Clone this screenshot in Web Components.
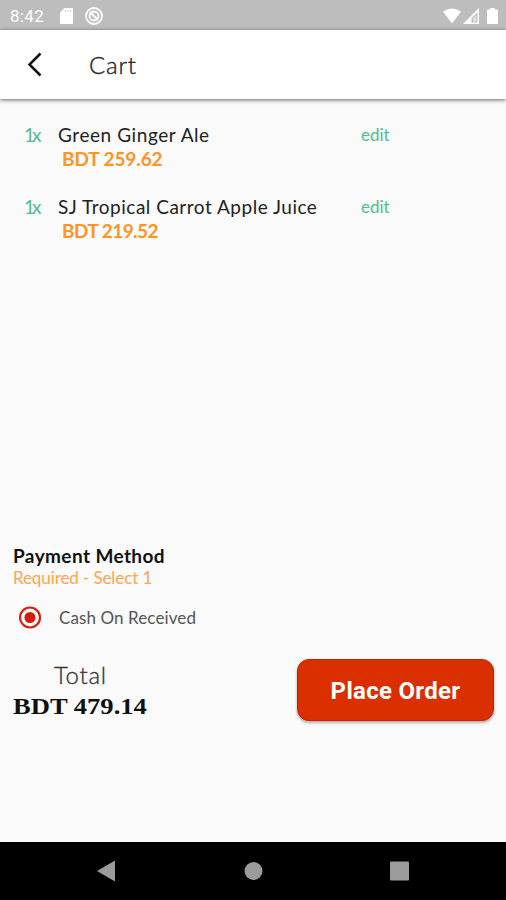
<!DOCTYPE html>
<html lang="en">

<head>
    <meta charset="utf-8">
    <title>Cart</title>
    <style>
    html, body {
        margin: 0;
        height: 100%;
        overflow: hidden;
        background: #fafafa;
        font-family: Lato, "Liberation Sans", sans-serif;
    }
    </style>
</head>

<body>
    <cart-screen></cart-screen>

    <template id="status-bar-template">
        <style>
        :host {
            display: flex;
            align-items: center;
            height: 30px;
            box-sizing: border-box;
            padding: 2px 8px 0 10px;
            background: #bdbdbd;
            color: #fff;
            font: 17px/28px Roboto, sans-serif;
        }
        .time { width: 50px; letter-spacing: .3px; }
        svg { display: block; fill: #fff; flex: none; }
        .sd { margin-right: 12px; }
        .wifi { margin-left: auto; margin-right: 2px; }
        .signal { margin-right: 8px; }
        </style>
        <span class="time">8:42</span>
        <svg class="sd" width="13" height="16" viewBox="0 0 13 16"><path d="M4.500 0H12q1 0 1 1v14q0 1-1 1H1q-1 0-1-1V4.500z"/><path d="M5 3h1.200M7.500 3h1.200M10 3h1.200" stroke="#bdbdbd" stroke-width="2" opacity=".6"/></svg>
        <svg width="18" height="18" viewBox="0 0 18 18"><circle cx="9" cy="9" r="8" fill="none" stroke="#fff" stroke-width="1.800"/><circle cx="9" cy="9" r="4.500" fill="none" stroke="#fff" stroke-width="1.800"/><path d="M5 5l8 8" stroke="#fff" stroke-width="2"/></svg>
        <svg class="wifi" width="18" height="16" viewBox="0 0 18 16"><path d="M0 3.700Q9-2.800 18 3.700L9 15.500z"/></svg>
        <svg class="signal" width="16" height="16" viewBox="0 0 16 16"><path fill-rule="evenodd" d="M16 0v16H0zM14.500 4.500l-6 5.500v4.500h6z"/><path d="M10 10l3.500-3v6.500H10z" opacity=".55"/></svg>
        <svg width="11" height="16" viewBox="0 0 11 16"><path d="M3.300 0h4.400v1.600H10q1 0 1 1V15q0 1-1 1H1q-1 0-1-1V2.600q0-1 1-1h2.300z"/></svg>
    </template>

    <template id="app-bar-template">
        <style>
        :host {
            display: flex;
            align-items: center;
            height: 69px;
            box-sizing: border-box;
            padding-left: 27px;
            background: #fff;
            box-shadow: 0 1px 4px rgba(0, 0, 0, .6);
        }
        svg { display: block; margin-right: 47px; }
        h1 { margin: 0; font-size: 24px; line-height: 30px; font-weight: 300; color: #222; letter-spacing: .8px; -webkit-text-stroke: .35px #222; }
        </style>
        <svg width="15" height="25" viewBox="0 0 15 25"><path d="M13.500 1.500L2.500 12.500l11 11" fill="none" stroke="#111" stroke-width="2.500"/></svg>
        <h1><slot></slot></h1>
    </template>

    <template id="cart-item-template">
        <style>
        :host {
            display: grid;
            grid-template-columns: 34px 303px auto;
            justify-content: start;
            align-content: start;
            padding-left: 24px;
            height: 71.500px;
            box-sizing: border-box;
            font-size: 19px;
            line-height: 24px;
            white-space: nowrap;
        }
        .count, .edit { color: #50bd91; }
        .count { letter-spacing: -3px; }
        .name { color: #222; letter-spacing: var(--name-spacing, 0); }
        .edit { font-size: 17px; }
        .price { grid-column: 2; padding-left: 4px; line-height: 23px; font-weight: 700; color: #ff9326; letter-spacing: var(--price-spacing, 0); }
        </style>
        <span class="count">1x</span>
        <span class="name"><slot name="name"></slot></span>
        <span class="edit">edit</span>
        <span class="price"><slot name="price"></slot></span>
    </template>

    <template id="payment-method-template">
        <style>
        :host { display: block; padding-left: 13px; white-space: nowrap; }
        h2 { margin: 0; font-size: 19px; line-height: 24px; font-weight: 700; color: #111; letter-spacing: .4px; }
        p { margin: 0; font-size: 17px; line-height: 20px; color: #ffa54f; letter-spacing: -.1px; }
        .option { display: flex; align-items: center; gap: 17px; height: 24px; margin-top: 17px; padding-left: 6px; font-size: 17px; color: #555; letter-spacing: .1px; }
        svg { display: block; }
        </style>
        <h2>Payment Method</h2>
        <p>Required - Select 1</p>
        <div class="option">
            <svg width="23" height="23" viewBox="0 0 23 23"><circle cx="11" cy="11.500" r="10" fill="none" stroke="#d71f16" stroke-width="2.200"/><circle cx="11" cy="11.500" r="5.500" fill="#d71b0b"/></svg>
            <span><slot></slot></span>
        </div>
    </template>

    <template id="order-footer-template">
        <style>
        :host { display: flex; justify-content: space-between; padding: 0 12px 0 13px; white-space: nowrap; }
        .label { padding-left: 41px; font-size: 24px; line-height: 31px; font-weight: 300; color: #333; letter-spacing: .7px; -webkit-text-stroke: .3px #333; }
        .sum { font: bold 23px/34px "Liberation Serif", serif; color: #111; transform: scaleX(1.155); transform-origin: left; }
        button {
            width: 197px;
            height: 62px;
            padding: 2px 0 0;
            border: 1px solid #d51a00;
            border-radius: 12px;
            background: #da2f00;
            box-shadow: 0 2px 3px rgba(0, 0, 0, .3);
            color: #fff;
            font: 700 24px/30px Roboto, sans-serif;
            letter-spacing: .3px;
        }
        </style>
        <div>
            <div class="label">Total</div>
            <div class="sum"><slot></slot></div>
        </div>
        <button>Place Order</button>
    </template>

    <template id="nav-bar-template">
        <style>
        :host {
            display: flex;
            align-items: center;
            justify-content: space-between;
            height: 58px;
            box-sizing: border-box;
            padding: 0 96px 0 97px;
            background: #000;
        }
        svg { display: block; fill: #9b9b9b; }
        </style>
        <svg width="18" height="22" viewBox="0 0 18 22"><path d="M18 .5v21L0 11z"/></svg>
        <svg width="20" height="20" viewBox="0 0 20 20"><circle cx="10.500" cy="10" r="9"/></svg>
        <svg width="20" height="20" viewBox="0 0 20 20"><rect x="0" y=".5" width="19" height="19" rx="1"/></svg>
    </template>

    <template id="cart-screen-template">
        <style>
        :host { display: flex; flex-direction: column; height: 900px; width: 506px; }
        .items { padding-top: 24px; height: 421px; }
        .first { --name-spacing: .57px; --price-spacing: -.1px; }
        .second { --name-spacing: .51px; --price-spacing: -.55px; }
        order-footer { margin-top: 30px; }
        nav-bar { margin-top: auto; }
        </style>
        <status-bar></status-bar>
        <app-bar>Cart</app-bar>
        <div class="items">
            <cart-item class="first">
                <span slot="name">Green Ginger Ale</span>
                <span slot="price">BDT 259.62</span>
            </cart-item>
            <cart-item class="second">
                <span slot="name">SJ Tropical Carrot Apple Juice</span>
                <span slot="price">BDT 219.52</span>
            </cart-item>
        </div>
        <payment-method>Cash On Received</payment-method>
        <order-footer>BDT 479.14</order-footer>
        <nav-bar></nav-bar>
    </template>

    <script>
    // each element clones the template named after its tag
    class TemplateElement extends HTMLElement {
        constructor() {
            super();
            const template = document.getElementById(this.localName + '-template').content;
            this.attachShadow({ mode: 'open' }).appendChild(template.cloneNode(true));
        }
    }

    customElements.define('status-bar', class extends TemplateElement {});
    customElements.define('app-bar', class extends TemplateElement {});
    customElements.define('cart-item', class extends TemplateElement {});
    customElements.define('payment-method', class extends TemplateElement {});
    customElements.define('order-footer', class extends TemplateElement {});
    customElements.define('nav-bar', class extends TemplateElement {});
    customElements.define('cart-screen', class extends TemplateElement {});
    </script>
</body>

</html>
